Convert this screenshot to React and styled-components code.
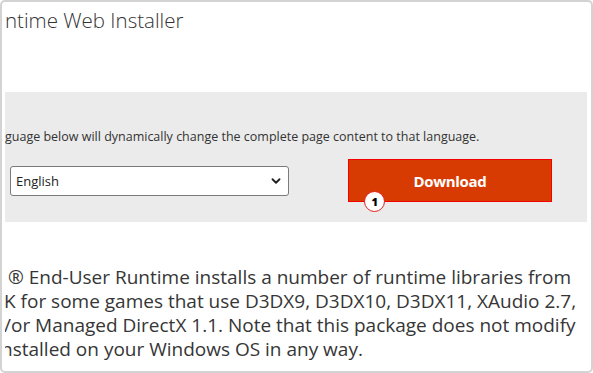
import styled, { createGlobalStyle } from "styled-components";
import { ChevronDown } from "lucide-react";

const GlobalStyle = createGlobalStyle`
	html, body {
		margin: 0;
		padding: 0;
		background: #ffffff;
	}
	body {
		font-family: "Open Sans", "Noto Sans", Arial, sans-serif;
		color: #363636;
	}
`;

const Frame = styled.div`
	width: 593px;
	height: 373px;
	box-sizing: border-box;
	border: 2px solid #d3d3d3;
	border-radius: 5px;
	overflow: hidden;
	padding-left: 3px;
	padding-right: 4px;
	display: flex;
	flex-direction: column;
`;

const Title = styled.h1`
	margin: 3px 0 0 0;
	font-size: 20.5px;
	font-weight: 300;
	line-height: 30px;
	color: #333;
	white-space: nowrap;
`;

const Panel = styled.section`
	margin-top: 57px;
	height: 130px;
	box-sizing: border-box;
	background: #ebebeb;
	padding: 36px 0 0 5px;
	overflow: hidden;
`;

const PanelText = styled.p`
	margin: 0 0 0 -5px;
	font-size: 12.5px;
	line-height: 18px;
	white-space: nowrap;
	color: #333;
`;

const Row = styled.div`
	display: flex;
	align-items: center;
	gap: 59px;
	margin-top: 13px;
`;

const SelectWrap = styled.div`
	position: relative;
	width: 279px;
	height: 30px;
`;

const Select = styled.select`
	appearance: none;
	width: 100%;
	height: 100%;
	box-sizing: border-box;
	border: 1px solid #7a7a7a;
	border-radius: 3px;
	background: #fff;
	padding: 0 0 0 5px;
	font-family: "Open Sans", "Noto Sans", Arial, sans-serif;
	font-size: 13px;
	color: #222;
	outline: none;
`;

const Chevron = styled.span`
	position: absolute;
	right: 6px;
	top: 8px;
	pointer-events: none;
	display: flex;
	color: #222;
`;

const DownloadButton = styled.button`
	position: relative;
	width: 204px;
	height: 43px;
	box-sizing: border-box;
	background: #d83b01;
	border: 1px solid #f50000;
	color: #fff;
	font-family: "Open Sans", "Noto Sans", Arial, sans-serif;
	font-size: 15px;
	font-weight: 700;
	letter-spacing: -0.3px;
	padding: 0;
	cursor: pointer;
`;

const Badge = styled.span`
	position: absolute;
	left: 15px;
	top: 31px;
	width: 21px;
	height: 21px;
	box-sizing: border-box;
	border-radius: 50%;
	background: #fff;
	border: 1.5px solid #e0201b;
	color: #000;
	font-size: 11px;
	font-weight: 800;
	display: flex;
	align-items: center;
	justify-content: center;
	line-height: 1;
`;

const Body = styled.div`
	margin-top: 43px;
	overflow: hidden;
	font-size: 19px;
	line-height: 24px;
	color: #363636;
`;

const Line = styled.div`
	white-space: nowrap;
	margin-left: ${(p) => p.$shift || 0}px;
`;

export default function App() {
	return (
		<>
			<GlobalStyle />
			<Frame>
				<Title>ntime Web Installer</Title>
				<Panel>
					<PanelText>
						guage below will dynamically change the complete page content to that language.
					</PanelText>
					<Row>
						<SelectWrap>
							<Select defaultValue="en">
								<option value="en">English</option>
							</Select>
							<Chevron>
								<ChevronDown size={14} strokeWidth={3.2} />
							</Chevron>
						</SelectWrap>
						<DownloadButton>
							Download
							<Badge>1</Badge>
						</DownloadButton>
					</Row>
				</Panel>
				<Body>
					<Line $shift={3}>® End-User Runtime installs a number of runtime libraries from</Line>
					<Line $shift={-1}>K for some games that use D3DX9, D3DX10, D3DX11, XAudio 2.7,</Line>
					<Line $shift={-1}>/or Managed DirectX 1.1. Note that this package does not modify</Line>
					<Line $shift={-4}>nstalled on your Windows OS in any way.</Line>
				</Body>
			</Frame>
		</>
	);
}
